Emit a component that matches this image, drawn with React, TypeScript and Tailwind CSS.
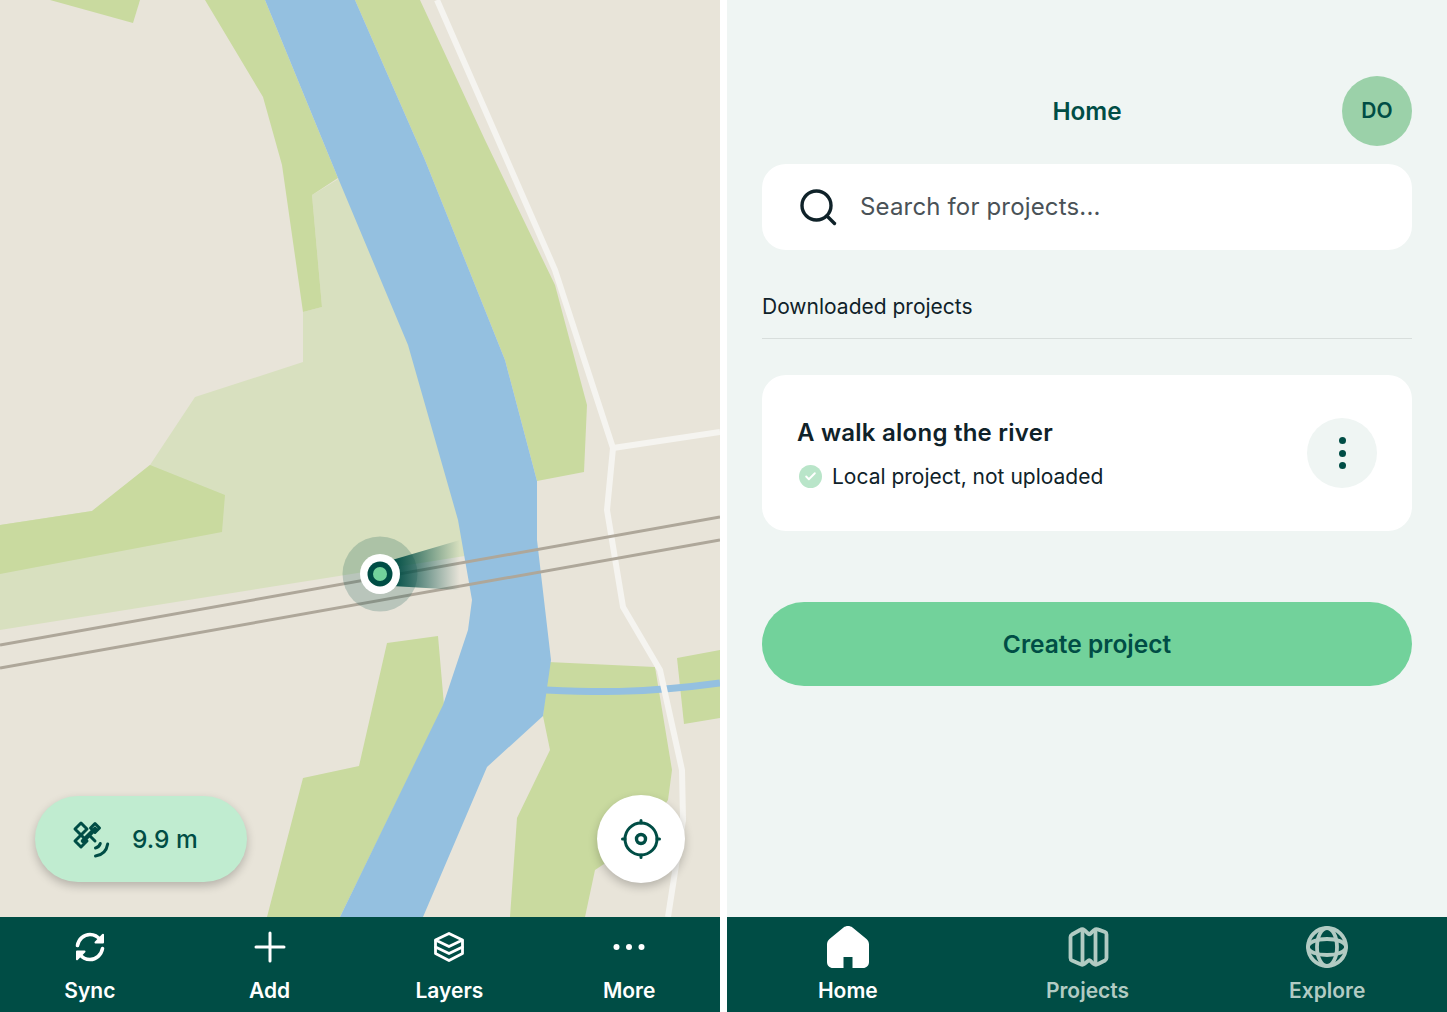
import { Check } from 'lucide-react';

const font = { fontFamily: 'Inter, "Liberation Sans", sans-serif' };

function SyncIcon() {
  return (
    <svg viewBox="0 0 32 32" className="w-8 h-8" fill="none" stroke="currentColor" strokeWidth="3.600" strokeLinecap="round" strokeLinejoin="round">
      <path d="M3.500 14.500C4.600 8.300 9.700 3.500 16 3.500c4.300 0 7.900 2.100 10.200 5.300" />
      <path d="M28.500 17.500C27.400 23.700 22.300 28.500 16 28.500c-4.300 0-7.900-2.100-10.200-5.300" />
      <path d="M29 3.800 29 11.500 21.500 11.500Z" fill="currentColor" strokeWidth="2" />
      <path d="M3 28.200 3 20.500 10.500 20.500Z" fill="currentColor" strokeWidth="2" />
    </svg>
  );
}

function PlusIcon() {
  return (
    <svg viewBox="0 0 32 32" className="w-8 h-8" fill="none" stroke="currentColor" strokeWidth="3" strokeLinecap="round">
      <path d="M16 2v28M2 16h28" />
    </svg>
  );
}

function LayersIcon() {
  return (
    <svg viewBox="0 0 32 32" className="w-8 h-8" fill="none" stroke="currentColor" strokeWidth="2.800" strokeLinecap="round" strokeLinejoin="round">
      <path d="M16 2.500 29.500 9 16 15.500 2.500 9Z" />
      <path d="M2.500 10v6L16 22.500 29.500 16v-6" />
      <path d="M2.500 16.500v6L16 29.500 29.500 22.500v-6" />
    </svg>
  );
}

function DotsIcon() {
  return (
    <svg viewBox="0 0 32 32" className="w-8 h-8" fill="currentColor">
      <circle cx="3.500" cy="16" r="3" />
      <circle cx="16" cy="16" r="3" />
      <circle cx="28.500" cy="16" r="3" />
    </svg>
  );
}

function HomeIcon() {
  return (
    <svg viewBox="0 0 42 42" className="w-[42px] h-[42px]" fill="currentColor">
      <path d="M16.500 1.500c2.500-2 6.500-2 9 0L39.500 13c1.700 1.500 2.500 3.300 2.500 5.500V36c0 3.500-2.500 6-6 6H25.500V31h-9v11H6c-3.500 0-6-2.500-6-6V18.500C0 16.300.800 14.500 2.500 13Z" />
    </svg>
  );
}

function MapIcon() {
  return (
    <svg viewBox="0 0 42 42" className="w-[42px] h-[42px]" fill="none" stroke="currentColor" strokeWidth="3.800" strokeLinejoin="round" strokeLinecap="round">
      <path d="M3.500 11c0-1 .5-1.800 1.500-2.500L13 4c1.500-1 3-1 4.500.2L21.500 8c.5.400 1 .400 1.500 0l4-3.800C28.500 3 30 3 31.500 3.600L38 6c1.200.5 1.500 1.300 1.500 2.500V32c0 1-.5 1.800-1.500 2.500L31 38c-1.500 1-3 1-4.500-.2L23 34.500c-.5-.4-1-.4-1.500 0l-4 3.300C16 39 14.500 39 13 38l-8-3.500C4 34 3.500 33 3.500 32Z" />
      <path d="M15.500 4v34M28.500 4v34" />
    </svg>
  );
}

function GlobeIcon() {
  return (
    <svg viewBox="0 0 42 42" className="w-[42px] h-[42px]" fill="none" stroke="currentColor" strokeWidth="3.800">
      <circle cx="21" cy="21" r="19" />
      <ellipse cx="21" cy="21" rx="10" ry="19" />
      <ellipse cx="21" cy="21" rx="19" ry="8" />
    </svg>
  );
}

function SatelliteIcon() {
  return (
    <svg viewBox="0 0 50 48" className="w-[50px] h-12" fill="none" stroke="#004d45" strokeWidth="3" strokeLinecap="round" strokeLinejoin="round">
      <path d="M16 8 22 14 16 20 10 14Z" />
      <path d="M16 20 22 26 16 32 10 26Z" />
      <path d="M30 8.500 34.500 13 30 17.500 25.500 13Z" />
      <path d="M18 26 30 14" strokeWidth="4.500" />
      <path d="M25 21l5 5" />
      <path d="M30.500 33c2.500-.5 4-2 4.800-4.500" />
      <path d="M30.500 41c6.500-.8 11-5 12.200-12" />
    </svg>
  );
}

function LocateIcon() {
  return (
    <svg viewBox="0 0 40 40" className="w-10 h-10" fill="none" stroke="#004d45" strokeLinecap="round">
      <circle cx="20" cy="20" r="16" strokeWidth="3" />
      <circle cx="20" cy="20" r="4.500" strokeWidth="3.400" />
      <path d="M20 1.500v2.500M20 36v2.500M1.500 20H4M36 20h2.500" strokeWidth="3" />
    </svg>
  );
}

function SearchIcon() {
  return (
    <svg viewBox="0 0 38 38" className="w-[38px] h-[38px]" fill="none" stroke="#0f2229" strokeWidth="3.400" strokeLinecap="round">
      <circle cx="17.500" cy="17.500" r="14.500" />
      <path d="M28 28l7.500 7.500" />
    </svg>
  );
}

function MapDrawing() {
  return (
    <svg viewBox="0 0 720 917" className="block w-[720px] h-[917px]">
      <defs>
        <linearGradient id="beam" x1="395" y1="0" x2="460" y2="0" gradientUnits="userSpaceOnUse">
          <stop offset="0" stopColor="#004d45" stopOpacity="0.95" />
          <stop offset="1" stopColor="#004d45" stopOpacity="0" />
        </linearGradient>
      </defs>
      <rect width="720" height="917" fill="#e8e4d9" />
      {/* light meadow */}
      <polygon fill="#d8e0bf" points="312,195 340,178 420,345 470,520 490,552 0,630 0,525 92,511 150,465 195,397 303,362 303,312 322,307" />
      {/* green areas */}
      <g fill="#c9da9f">
        <polygon points="50,0 133,23 140,0" />
        <polygon points="0,525 92,511 150,465 225,495 222,532 0,574" />
        <polygon points="205,0 263,97 282,165 303,312 322,307 312,195 338,178 265,0" />
        <polygon points="355,0 420,0 485,140 555,285 587,405 584,472 537,481 505,360 425,160" />
        <polygon points="387,643 438,636 444,705 340,917 267,917 303,778 359,766" />
        <polygon points="548,662 655,667 672,770 668,800 640,840 595,870 585,917 510,917 517,818 550,750 543,716" />
        <polygon points="677,658 720,650 720,718 684,724" />
      </g>
      {/* river */}
      <polygon fill="#94c0e0" points="265,0 355,0 425,160 505,360 537,481 537,540 551,660 543,716 487,767 423,917 340,917 443,705 468,630 472,600 458,520 408,345 338,178" />
      <path d="M546 690C590 692 640 694 720 683" fill="none" stroke="#94c0e0" strokeWidth="7" />
      {/* roads */}
      <g fill="none" stroke="#f5f4f0" strokeWidth="6">
        <path d="M437 0 555 270 613 448 607 510 623 607 660 670 682 770 683 820 668 917" />
        <path d="M613 448 720 432" />
      </g>
      <g fill="none" stroke="#aea79a" strokeWidth="3">
        <path d="M0 645 720 517" />
        <path d="M0 668 720 540" />
      </g>
      {/* location marker */}
      <circle cx="380" cy="574" r="37.500" fill="#004d45" fillOpacity="0.2" />
      <polygon points="392,560 460,540 460,590 392,586" fill="url(#beam)" />
      <circle cx="380" cy="574" r="20" fill="#ffffff" />
      <circle cx="380" cy="574" r="12.500" fill="#004d45" />
      <circle cx="380" cy="574" r="7" fill="#72d29b" />
    </svg>
  );
}

function NavItem({ icon, label, muted }: { icon: React.ReactNode; label: string; muted?: boolean }) {
  return (
    <div className={`flex-1 flex flex-col items-center pt-[9px] ${muted ? 'text-[#b2cbc3]' : 'text-white'}`}>
      <div className="h-[42px] flex items-center justify-center">{icon}</div>
      <span className="mt-[8px] text-[21px] leading-[30px] font-semibold">{label}</span>
    </div>
  );
}

export default function App() {
  return (
    <div className="w-[1447px] h-[1012px] flex justify-between bg-white overflow-hidden" style={font}>
      {/* Map screen */}
      <div className="relative w-[720px] flex flex-col">
        <MapDrawing />
        <div className="absolute left-[35px] top-[796px] w-[212px] h-[86px] rounded-full bg-[#c0ecd0] shadow-[0_4px_10px_rgba(0,0,0,0.22)] flex items-center pl-[30px] gap-[17px]">
          <SatelliteIcon />
          <span className="text-[24.5px] leading-[32px] pb-[1px] font-medium text-[#004d45]">9.9 m</span>
        </div>
        <div className="absolute left-[597px] top-[795px] w-[88px] h-[88px] rounded-full bg-white shadow-[0_4px_10px_rgba(0,0,0,0.22)] flex items-center justify-center">
          <LocateIcon />
        </div>
        <div className="flex-1 flex bg-[#004d45] pr-[1px]">
          <NavItem icon={<SyncIcon />} label="Sync" />
          <NavItem icon={<PlusIcon />} label="Add" />
          <NavItem icon={<LayersIcon />} label="Layers" />
          <NavItem icon={<DotsIcon />} label="More" />
        </div>
      </div>

      {/* Home screen */}
      <div className="w-[720px] flex flex-col bg-[#eff5f3]">
        <div className="flex-1 px-[35px] pt-[76px]">
          <div className="flex items-center justify-between">
            <div className="w-[70px]" />
            <h1 className="text-[24.300px] font-semibold text-[#004d45]">Home</h1>
            <div className="w-[70px] h-[70px] rounded-full bg-[#9bd1a9] flex items-center justify-center text-[21px] font-semibold text-[#004d45]">
              DO
            </div>
          </div>

          <div className="mt-[18px] h-[86px] rounded-[24px] bg-white flex items-center pl-[37px] gap-[23px]">
            <SearchIcon />
            <span className="text-[24px] text-[#4a5257] tracking-[0.16px]">Search for projects...</span>
          </div>

          <div className="mt-[41px] pb-[15px] border-b border-[#d8dedc] text-[21px] leading-[32px] text-[#0f2229]">
            Downloaded projects
          </div>

          <div className="mt-[36px] h-[156px] rounded-[24px] bg-white flex items-center justify-between pl-[35px] pr-[35px]">
            <div className="pt-[3px]">
              <div className="text-[24px] leading-[32px] font-semibold text-[#0f2229] tracking-[0.24px]">A walk along the river</div>
              <div className="mt-[12px] flex items-center gap-[10px] pl-[2px]">
                <span className="w-[23px] h-[23px] rounded-full bg-[#b9e5c9] flex items-center justify-center">
                  <Check className="w-[13px] h-[13px] text-white" strokeWidth={3.500} />
                </span>
                <span className="text-[21px] leading-[32px] text-[#0f2229]">Local project, not uploaded</span>
              </div>
            </div>
            <div className="w-[70px] h-[70px] rounded-full bg-[#eff5f3] flex flex-col items-center justify-center gap-[5.500px]">
              <span className="w-[7px] h-[7px] rounded-full bg-[#004d45]" />
              <span className="w-[7px] h-[7px] rounded-full bg-[#004d45]" />
              <span className="w-[7px] h-[7px] rounded-full bg-[#004d45]" />
            </div>
          </div>

          <div className="mt-[71px] h-[84px] rounded-full bg-[#72d29b] flex items-center justify-center text-[24.500px] font-semibold text-[#004d45]">
            Create project
          </div>
        </div>
        <div className="h-[95px] flex bg-[#004d45] pl-[1px]">
          <NavItem icon={<HomeIcon />} label="Home" />
          <NavItem icon={<MapIcon />} label="Projects" muted />
          <NavItem icon={<GlobeIcon />} label="Explore" muted />
        </div>
      </div>
    </div>
  );
}
